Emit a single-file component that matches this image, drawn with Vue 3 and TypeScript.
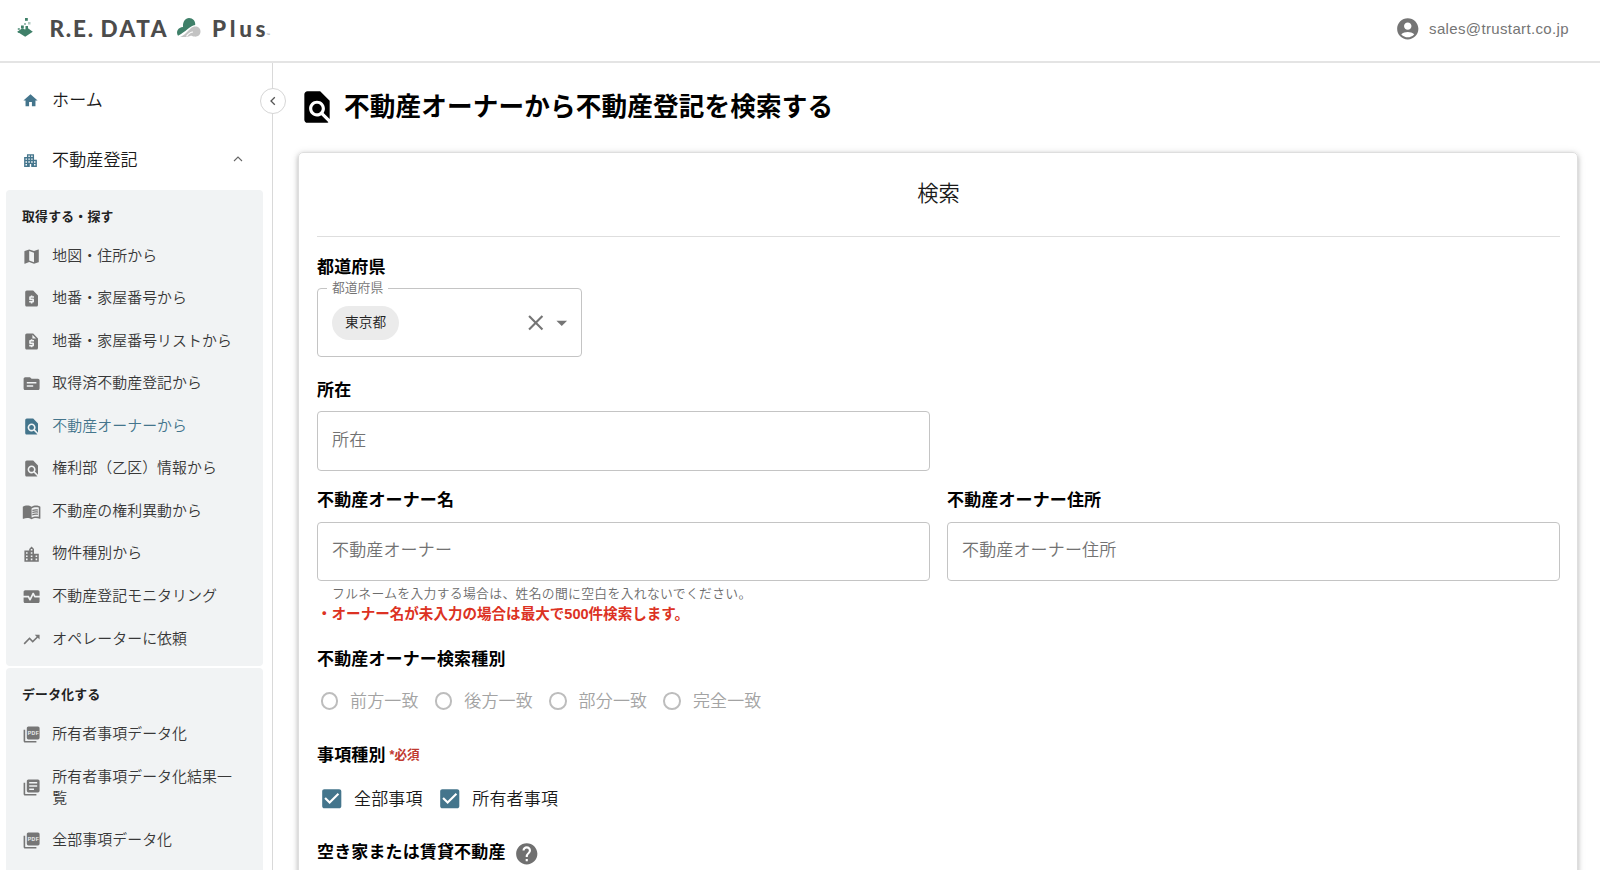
<script setup lang="ts">
import { ref } from 'vue'

interface MenuItem { label: string; icon: string; active?: boolean }
interface MenuGroup { title: string; items: MenuItem[] }

const icons: Record<string, string> = {
  home: 'M10 20v-6h4v6h5v-8h3L12 3 2 12h3v8z',
  apartment: 'M17 11V3H7v4H3v14h8v-4h2v4h8V11h-4zM7 19H5v-2h2v2zm0-4H5v-2h2v2zm0-4H5V9h2v2zm4 4H9v-2h2v2zm0-4H9V9h2v2zm0-4H9V5h2v2zm4 8h-2v-2h2v2zm0-4h-2V9h2v2zm0-4h-2V5h2v2zm4 12h-2v-2h2v2zm0-4h-2v-2h2v2z',
  map: 'M20.5 3l-.16.03L15 5.1 9 3 3.36 4.9c-.21.07-.36.25-.36.48V20.5c0 .28.22.5.5.5l.16-.03L9 18.9l6 2.1 5.64-1.9c.21-.07.36-.25.36-.48V3.5c0-.28-.22-.5-.5-.5zM15 19l-6-2.11V5l6 2.11V19z',
  request: 'M14 2H6c-1.1 0-1.99.9-1.99 2L4 20c0 1.1.89 2 1.99 2H18c1.1 0 2-.9 2-2V8l-6-6zm1 9h-4v1h3c.55 0 1 .45 1 1v3c0 .55-.45 1-1 1h-1v1h-2v-1H9v-2h4v-1h-3c-.55 0-1-.45-1-1v-3c0-.55.45-1 1-1h1V8h2v1h2v2z',
  quote: 'M14 2H6c-1.1 0-1.99.9-1.99 2L4 20c0 1.1.89 2 1.99 2H18c1.1 0 2-.9 2-2V8l-6-6zm1 10h-4v1h3c.55 0 1 .45 1 1v3c0 .55-.45 1-1 1h-1v1h-2v-1H9v-2h4v-1h-3c-.55 0-1-.45-1-1v-3c0-.55.45-1 1-1h1V9h2v1h2v2zm-2-4V3.5L17.5 8H13z',
  source: 'M20 6h-8l-2-2H4c-1.1 0-1.99.9-1.99 2L2 18c0 1.1.9 2 2 2h16c1.1 0 2-.9 2-2V8c0-1.1-.9-2-2-2zm-6 10H6v-2h8v2zm4-4H6v-2h12v2z',
  find: 'M20 19.59V8l-6-6H6c-1.1 0-1.99.9-1.99 2L4 20c0 1.1.89 2 1.99 2H18c.45 0 .85-.15 1.19-.4l-4.43-4.43c-.8.52-1.74.83-2.76.83-2.76 0-5-2.24-5-5s2.24-5 5-5 5 2.24 5 5c0 1.02-.31 1.96-.83 2.75L20 19.59zM9 13c0 1.66 1.34 3 3 3s3-1.34 3-3-1.34-3-3-3-3 1.34-3 3z',
  book: 'M21 5c-1.11-.35-2.33-.5-3.5-.5-1.95 0-4.05.4-5.5 1.5-1.45-1.1-3.55-1.5-5.5-1.5S2.45 4.9 1 6v14.65c0 .25.25.5.5.5.1 0 .15-.05.25-.05C3.1 20.45 5.05 20 6.5 20c1.95 0 4.05.4 5.5 1.5 1.35-.85 3.8-1.5 5.5-1.5 1.65 0 3.35.3 4.75 1.05.1.05.15.05.25.05.25 0 .5-.25.5-.5V6c-.6-.45-1.25-.75-2-1zm0 13.5c-1.1-.35-2.3-.5-3.5-.5-1.7 0-4.15.65-5.5 1.5V8c1.35-.85 3.8-1.5 5.5-1.5 1.2 0 2.4.15 3.5.5v11.5zM17.5 10.5c.88 0 1.73.09 2.5.26V9.24c-.79-.15-1.64-.24-2.5-.24-1.7 0-3.24.29-4.5.83v1.66c1.13-.64 2.7-.99 4.5-.99zM13 12.49v1.66c1.13-.64 2.7-.99 4.5-.99.88 0 1.73.09 2.5.26V11.9c-.79-.15-1.64-.24-2.5-.24-1.7 0-3.24.3-4.5.83zM17.5 14.33c-1.7 0-3.24.29-4.5.83v1.66c1.13-.64 2.7-.99 4.5-.99.88 0 1.73.09 2.5.26v-1.52c-.79-.16-1.64-.24-2.5-.24z',
  city: 'M15 11V5l-3-3-3 3v2H3v14h18V11h-6zm-8 8H5v-2h2v2zm0-4H5v-2h2v2zm0-4H5V9h2v2zm6 8h-2v-2h2v2zm0-4h-2v-2h2v2zm0-4h-2V9h2v2zm0-4h-2V5h2v2zm6 12h-2v-2h2v2zm0-4h-2v-2h2v2z',
  monitor: 'M15.11 12.45L14 10.24l-3.11 6.21c-.16.34-.51.55-.89.55s-.73-.21-.89-.55L7.38 13H2v5c0 1.1.9 2 2 2h16c1.1 0 2-.9 2-2v-5h-6c-.38 0-.73-.21-.89-.55zM20 4H4c-1.1 0-2 .9-2 2v5h6c.38 0 .73.21.89.55L10 13.76l3.11-6.21c.34-.68 1.45-.68 1.79 0L16.62 11H22V6c0-1.1-.9-2-2-2z',
  trend: 'M16 6l2.29 2.29-4.88 4.88-4-4L2 16.59 3.41 18l6-6 4 4 6.3-6.29L22 12V6z',
  pdf: 'M20 2H8c-1.1 0-2 .9-2 2v12c0 1.1.9 2 2 2h12c1.1 0 2-.9 2-2V4c0-1.1-.9-2-2-2zM4 6H2v14c0 1.1.9 2 2 2h14v-2H4V6z',
  library: 'M4 6H2v14c0 1.1.9 2 2 2h14v-2H4V6zm16-4H8c-1.1 0-2 .9-2 2v12c0 1.1.9 2 2 2h12c1.1 0 2-.9 2-2V4c0-1.1-.9-2-2-2zm-1 9H9V9h10v2zm-4 4H9v-2h6v2zm4-8H9V5h10v2z',
  account: 'M12 2C6.48 2 2 6.48 2 12s4.48 10 10 10 10-4.48 10-10S17.52 2 12 2zm0 4c1.93 0 3.5 1.57 3.5 3.5S13.93 13 12 13s-3.5-1.57-3.5-3.5S10.07 6 12 6zm0 14c-2.03 0-4.43-.82-6.14-2.88C7.55 15.8 9.68 15 12 15s4.45.8 6.14 2.12C16.43 19.18 14.03 20 12 20z',
  help: 'M12 2C6.48 2 2 6.48 2 12s4.48 10 10 10 10-4.48 10-10S17.52 2 12 2zm1 17h-2v-2h2v2zm2.07-7.75l-.9.92C13.45 12.9 13 13.5 13 15h-2v-.5c0-1.1.45-2.1 1.17-2.83l1.24-1.26c.37-.36.59-.86.59-1.41 0-1.1-.9-2-2-2s-2 .9-2 2H8c0-2.21 1.79-4 4-4s4 1.79 4 4c0 .88-.36 1.68-.93 2.25z',
  check: 'M19 3H5c-1.11 0-2 .9-2 2v14c0 1.1.89 2 2 2h14c1.11 0 2-.9 2-2V5c0-1.1-.89-2-2-2zm-9 14l-5-5 1.41-1.41L10 14.17l7.59-7.59L19 8l-9 9z',
  close: 'M19 6.41L17.59 5 12 10.59 6.41 5 5 6.41 10.59 12 5 17.59 6.41 19 12 13.41 17.59 19 19 17.59 13.41 12z',
}

const groups: MenuGroup[] = [
  {
    title: '取得する・探す',
    items: [
      { label: '地図・住所から', icon: 'map' },
      { label: '地番・家屋番号から', icon: 'request' },
      { label: '地番・家屋番号リストから', icon: 'quote' },
      { label: '取得済不動産登記から', icon: 'source' },
      { label: '不動産オーナーから', icon: 'find', active: true },
      { label: '権利部（乙区）情報から', icon: 'find' },
      { label: '不動産の権利異動から', icon: 'book' },
      { label: '物件種別から', icon: 'city' },
      { label: '不動産登記モニタリング', icon: 'monitor' },
      { label: 'オペレーターに依頼', icon: 'trend' },
    ],
  },
  {
    title: 'データ化する',
    items: [
      { label: '所有者事項データ化', icon: 'pdf' },
      { label: '所有者事項データ化結果一覧', icon: 'library' },
      { label: '全部事項データ化', icon: 'pdf' },
    ],
  },
]

const location = ref('')
const owner = ref('')
const ownerAddress = ref('')
const matchTypes = ['前方一致', '後方一致', '部分一致', '完全一致']
const kinds = ['全部事項', '所有者事項']
</script>

<template>
  <div class="app">
    <header class="header">
      <svg class="logo" width="275" height="56" viewBox="0 0 275 56">
        <g fill="#3f8069">
          <path d="M17.300 31.800l5-3.500 2.700 1.300 2.300-1.800 5.500 4-7.600 5z" />
          <rect x="25" y="18" width="2.800" height="2.800" />
          <rect x="21" y="25.500" width="2.800" height="3" />
          <rect x="25.500" y="26" width="2.500" height="3" />
          <rect x="17.800" y="28" width="2" height="2" opacity=".7" />
          <rect x="17.800" y="31" width="2" height="2" opacity=".7" />
          <rect x="28" y="22" width="2.500" height="2.500" opacity=".4" />
          <rect x="24" y="23" width="2" height="2" opacity=".5" />
        </g>
        <g class="wordmark">
          <text x="49.500" y="36.500" textLength="43.500">R.E.</text>
          <text x="100.500" y="36.500" textLength="66">DATA</text>
          <text x="212" y="36.500" textLength="53.500">Plus</text>
        </g>
        <path fill="#3f8069" d="M178 35.800C175.600 31.500 178 27.300 183 27c-.3-5.500 2.300-9 6-9 3.800 0 6.700 3.200 6.200 7-5.500.8-9.500 7-17.200 10.800z" />
        <path fill="#c3c3c3" d="M180 37c4.500-1.500 8-6.300 10.500-8.500 3.800-3.300 10-2.300 10 3 0 4-3.500 5.500-6 5.100-2-.3-3-1.600-4.500-.6-2 1.200-5 1-10 1z" />
        <path d="M186.500 36.300c1.800-2.300 3.500-4.200 6.500-4.300" fill="none" stroke="#fff" stroke-width="1.100" />
        <text class="tm" x="266" y="36">™</text>
      </svg>
      <div class="account">
        <svg class="i26" viewBox="0 0 24 24"><path :d="icons.account" /></svg>
        <span>sales@trustart.co.jp</span>
      </div>
    </header>

    <div class="body">
      <nav class="side">
        <button class="collapse" aria-label="collapse">
          <svg width="10" height="10" viewBox="0 0 10 10"><path d="M6.800 1.200L3 5l3.800 3.800" /></svg>
        </button>
        <a class="top home"><svg viewBox="0 0 24 24"><path :d="icons.home" /></svg><span>ホーム</span></a>
        <a class="top estate">
          <svg viewBox="0 0 24 24"><path :d="icons.apartment" /></svg><span>不動産登記</span>
          <svg class="chev" viewBox="0 0 10 10"><path d="M1 7l4-4 4 4" /></svg>
        </a>
        <section v-for="g in groups" :key="g.title" class="group">
          <h3>{{ g.title }}</h3>
          <a v-for="m in g.items" :key="m.label" class="item" :class="{ active: m.active }">
            <svg viewBox="0 0 24 24">
              <path :d="icons[m.icon]" />
              <text v-if="m.icon === 'pdf'" class="pdf" x="7.200" y="12.800" textLength="13.800">PDF</text>
            </svg>
            <span>{{ m.label }}</span>
          </a>
        </section>
      </nav>

      <main class="main">
        <h1><svg viewBox="0 0 24 24"><path :d="icons.find" /></svg><span>不動産オーナーから不動産登記を検索する</span></h1>
        <div class="card">
          <h2>検索</h2>
          <div class="field pref">
            <label>都道府県</label>
            <fieldset class="select">
              <legend>都道府県</legend>
              <div class="select-row">
                <span class="chip">東京都</span>
                <svg class="i26 clear" viewBox="0 0 24 24"><path :d="icons.close" /></svg>
                <svg class="i26" viewBox="0 0 24 24"><path d="M7 10l5 5 5-5z" /></svg>
              </div>
            </fieldset>
          </div>
          <div class="cols">
            <div class="field">
              <label>所在</label>
              <input v-model="location" placeholder="所在" />
            </div>
          </div>
          <div class="cols owners">
            <div class="field">
              <label>不動産オーナー名</label>
              <input v-model="owner" placeholder="不動産オーナー" />
              <p class="hint">フルネームを入力する場合は、姓名の間に空白を入れないでください。</p>
              <p class="warn">・オーナー名が未入力の場合は最大で500件検索します。</p>
            </div>
            <div class="field">
              <label>不動産オーナー住所</label>
              <input v-model="ownerAddress" placeholder="不動産オーナー住所" />
            </div>
          </div>
          <div class="label match">不動産オーナー検索種別</div>
          <div class="radios">
            <span v-for="t in matchTypes" :key="t" class="radio"><i></i><span>{{ t }}</span></span>
          </div>
          <div class="label kind">事項種別<small>*必須</small></div>
          <div class="checks">
            <span v-for="k in kinds" :key="k" class="checkitem"><svg class="i26" viewBox="0 0 24 24"><path :d="icons.check" /></svg><span>{{ k }}</span></span>
          </div>
          <div class="label vacant">空き家または賃貸不動産<svg class="i26" viewBox="0 0 24 24"><path :d="icons.help" /></svg></div>
        </div>
      </main>
    </div>
  </div>
</template>

<style>
body { margin: 0; background: #fff; overflow: hidden; }
</style>

<style scoped>
.app {
  width: 1600px; height: 870px; overflow: hidden; box-sizing: border-box;
  display: flex; flex-direction: column;
  font-family: "Liberation Sans", "Noto Sans CJK JP", sans-serif;
  font-size: 17px; letter-spacing: .15px; font-weight: 350; color: #1a1a1a;
}
.app *, .app *::before { box-sizing: border-box; }
svg { flex: none; fill: currentColor; }
h1, h2, h3, p { margin: 0; }
.i26 { width: 25.500px; height: 25.500px; }
.header { height: 63px; flex: none; border-bottom: 2px solid #e4e4e4; display: flex; justify-content: space-between; align-items: flex-start; }
.logo { display: block; overflow: visible; }
.wordmark { font: 900 22.500px Lato, sans-serif; fill: #4c4c4c; letter-spacing: 0; }
.tm { font-size: 4px; fill: #888; letter-spacing: 0; }
.account { display: flex; align-items: center; gap: 8.500px; margin: 16px 31px 0 0; font-weight: 400; font-size: 15px; letter-spacing: .36px; color: #757575; }

.body { flex: 1; display: flex; min-height: 0; }
.side { position: relative; width: 273px; flex: none; border-right: 1px solid #d9d9d9; padding-right: 9px; }
.collapse { position: absolute; right: -14px; top: 25px; width: 26px; height: 26px; padding: 0; border: 1px solid #d6d6d6; border-radius: 50%; background: #fff; display: flex; align-items: center; justify-content: center; }
.collapse svg { fill: none; stroke: #555; stroke-width: 1.300; }
.top { display: flex; align-items: center; height: 60px; padding-left: 22px; }
.top svg { width: 17px; height: 17px; color: #44758c; margin-right: 13px; }
.top span { padding-bottom: 4px; }
.home { margin-top: 7px; }
.estate { height: 60px; }
.top .chev { width: 10px; height: 10px; margin: -3px 20px 0 auto; fill: none; stroke: #666; stroke-width: 1.100; }
.group { margin-left: 6px; width: 257px; border-radius: 4px; background: #f1f3f4; padding: 16px 17px 6px 16px; margin-bottom: 2px; }
.group:last-child { padding-bottom: 30px; }
.group h3 { font-size: 12.800px; line-height: 22px; font-weight: 700; letter-spacing: .28px; margin-bottom: 7px; color: #222; }
.item { display: flex; align-items: center; min-height: 42.550px; font-size: 14.900px; line-height: 21.300px; letter-spacing: .1px; padding: 10.500px 0; color: #383838; }
.item svg { width: 19.200px; height: 19.200px; color: #767676; margin-right: 11px; }
.item.active, .item.active svg { color: #44758c; }
.item .pdf { font: 700 6.400px "Liberation Sans", sans-serif; fill: #f1f3f4; letter-spacing: 0; }

.main { flex: 1; min-width: 0; padding: 24px 22px 0 25px; }
h1 { display: flex; align-items: center; height: 40px; font-size: 25.600px; letter-spacing: .15px; font-weight: 700; color: #000; }
h1 svg { width: 38px; height: 38px; margin-right: 8px; }
h1 span { padding-bottom: 5px; }
.card { margin-top: 25px; height: 900px; padding: 0 17px 0 18px; border: 1px solid #dedede; border-radius: 5px; box-shadow: 0 2px 5px rgba(0, 0, 0, .22), 0 1px 8px rgba(0, 0, 0, .11); }
h2 { height: 84px; border-bottom: 1px solid #dedede; text-align: center; font-size: 21.300px; letter-spacing: 0; font-weight: 350; line-height: 83px; }
.field { display: flex; flex-direction: column; }
.field label, .label { font-weight: 700; color: #000; line-height: 24px; letter-spacing: .14px; }
.pref { padding-top: 19px; width: 265px; }
.select { margin: 0; min-width: 0; height: 77px; border: 1px solid #c4c4c4; border-radius: 4px; padding: 0 6.500px 0 14px; }
.select legend { font-size: 12.800px; letter-spacing: 0; line-height: 16px; padding: 0 5px; margin-left: -5px; color: #727272; }
.select-row { display: flex; align-items: center; height: 53px; color: #757575; }
.chip { background: #ebebeb; border-radius: 17px; height: 34px; line-height: 33px; padding: 0 13px; font-size: 13.700px; letter-spacing: 0; color: #222; }
.clear { margin: 0 1px 0 auto; }
.cols { display: grid; grid-template-columns: 1fr 1fr; column-gap: 17px; padding-top: 22px; }
.field input { margin-top: 8px; height: 60px; width: 100%; border: 1px solid #c4c4c4; border-radius: 4px; padding: 0 14px 1px; font: inherit; letter-spacing: inherit; outline: 0; background: transparent; }
.field input::placeholder { color: #727272; opacity: 1; }
.owners { padding-top: 18px; }
.owners .field input { margin-top: 9px; height: 59px; }
.hint { font-size: 12.800px; line-height: 18px; letter-spacing: .34px; color: #6c6c6c; padding: 4px 0 0 15px; }
.warn { font-size: 14.560px; line-height: 20px; letter-spacing: 0; font-weight: 700; color: #dc3223; margin-top: 1px; }
.match { margin-top: 24px; }
.radios { display: flex; height: 40px; align-items: center; margin-top: 9px; color: #a3a3a3; }
.radio { width: 114.300px; display: flex; align-items: center; white-space: nowrap; }
.radio span, .checkitem span { padding-bottom: 3px; }
.radio i { width: 17.500px; height: 17.500px; border: 2px solid #bdbdbd; border-radius: 50%; margin: 0 12px 0 3.500px; }
.kind { margin-top: 22px; }
.kind small { font-size: 12.600px; color: #c0392f; margin-left: 4px; letter-spacing: 0; vertical-align: 1.500px; }
.checks { display: flex; height: 40px; align-items: center; margin-top: 11px; }
.checkitem { display: flex; align-items: center; margin-right: 12.700px; padding-left: 2px; }
.checkitem svg { color: #44758c; margin-right: 9.500px; }
.vacant { display: flex; align-items: center; margin-top: 22px; }
.vacant svg { color: #707070; margin-left: 8.500px; }
</style>
